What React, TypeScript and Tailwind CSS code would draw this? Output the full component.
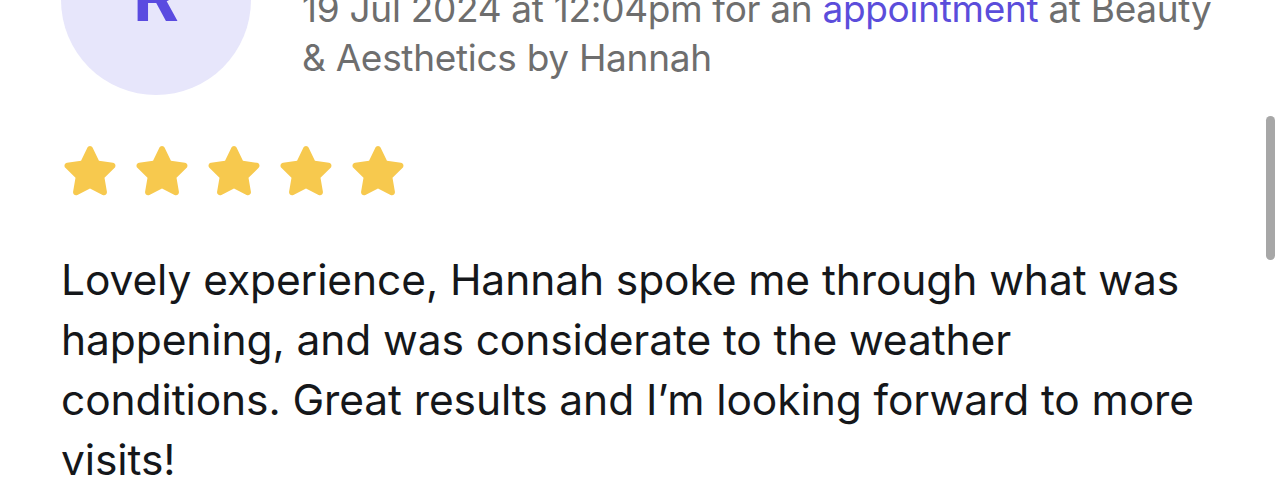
import React from "react";

function Star() {
  return (
    <svg width="58" height="56" viewBox="0 0 24 23" className="block">
      <path
        d="M12 1.2c.5 0 .9.3 1.1.7l2.6 5.4 5.8.8c1 .1 1.4 1.4.7 2.1l-4.2 4.1 1 5.8c.2 1-.9 1.8-1.8 1.3L12 18.7l-5.2 2.7c-.9.5-2-.3-1.8-1.3l1-5.8-4.2-4.1c-.7-.7-.3-2 .7-2.1l5.8-.8 2.6-5.4c.2-.4.6-.7 1.1-.7z"
        fill="#F7C94E"
      />
    </svg>
  );
}

export default function App() {
  return (
    <div
      className="relative w-[1284px] h-[495px] overflow-hidden bg-white"
      style={{ fontFamily: "Inter, 'Noto Sans', sans-serif" }}
    >
      <div className="pl-[61px] pr-[40px]">
        <div className="flex items-start mt-[-95px]">
          <div className="w-[190px] h-[190px] shrink-0 rounded-full bg-[#E7E6FB] flex items-center justify-center">
            <span className="text-[70px] font-bold text-[#5A4BE0] leading-none -mt-[8px]">R</span>
          </div>
          <div className="ml-[51px] mt-[79px] text-[37px] leading-[49px] text-[#6E6E6E] tracking-[-0.3px] whitespace-nowrap">
            19 Jul 2024 at 12:04pm for an{" "}
            <span className="text-[#5B4DDB]">appointment</span> at Beauty
            <br />& Aesthetics by Hannah
          </div>
        </div>
        <div className="flex gap-[14px] mt-[48px]">
          <Star />
          <Star />
          <Star />
          <Star />
          <Star />
        </div>
        <p className="mt-[51px] text-[42.5px] leading-[60px] text-[#15171A] tracking-[-0.1px] whitespace-nowrap">
          Lovely experience, Hannah spoke me through what was
          <br />
          happening, and was considerate to the weather
          <br />
          conditions. Great results and I’m looking forward to more
          <br />
          visits!
        </p>
      </div>
      <div className="absolute left-[1266px] top-[116px] w-[9px] h-[144px] rounded-full bg-[#A7A7A7]" />
    </div>
  );
}
